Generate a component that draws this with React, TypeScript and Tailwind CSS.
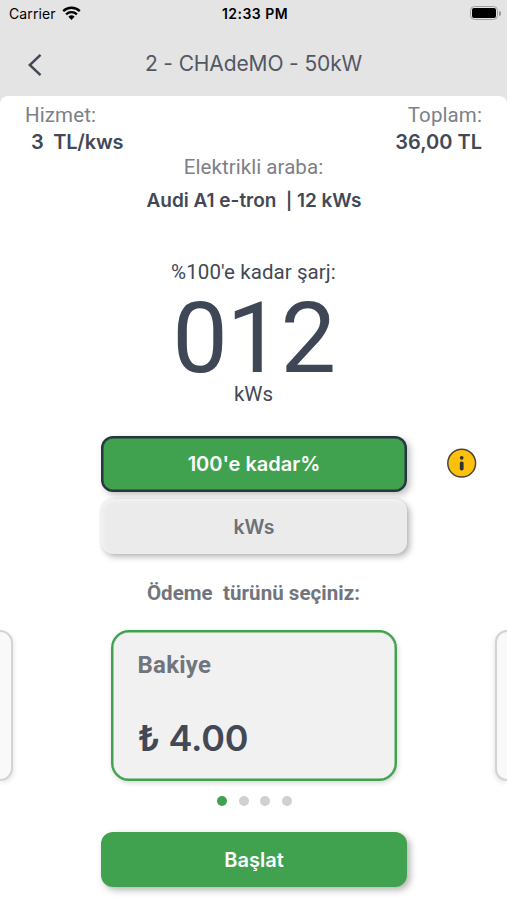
import React from "react";

const inter = "font-[Inter,sans-serif]";
const roboto = "font-[Roboto,sans-serif]";

function StatusBar() {
  return (
    <div className="flex h-7 items-center pl-[9px] pr-[6px] text-black">
      <div className="flex flex-1 items-center gap-[6px]">
        <span className={`${inter} text-[14px] leading-7 tracking-[0.1px]`}>Carrier</span>
        <svg width="19" height="14" viewBox="0 0 19 14" className="-mt-0.5">
          <path d="M9.5 14 L6.4 10.7 A4.6 4.6 0 0 1 12.6 10.7 Z" fill="black" />
          <path d="M4.1 8.3 A7.8 7.8 0 0 1 14.9 8.3" fill="none" stroke="black" strokeWidth="2.3" />
          <path d="M1.2 5.1 A12 12 0 0 1 17.8 5.1" fill="none" stroke="black" strokeWidth="2.3" />
        </svg>
      </div>
      <span className={`${inter} text-[14px] font-semibold leading-7 tracking-[0.45px]`}>12:33 PM</span>
      <div className="flex flex-1 items-center justify-end gap-px">
        <div className="mt-[-2px] flex h-[14px] w-[28px] rounded-[4.5px] border-[1.5px] border-[#a0a0a0] p-px">
          <div className="flex-1 rounded-[2px] bg-black" />
        </div>
        <div className="mt-[-2px] h-[5px] w-[2px] rounded-r-full bg-[#999]" />
      </div>
    </div>
  );
}

function SideCard({ side }: { side: "left" | "right" }) {
  return (
    <div
      className={
        side === "left"
          ? "h-[151px] w-[13px] rounded-r-[16px] border-2 border-l-0 border-[#d3d3d3] bg-[#f9f9f9] shadow-[1px_2px_4px_#0000001a]"
          : "h-[151px] w-[12px] rounded-l-[16px] border-2 border-r-0 border-[#d3d3d3] bg-[#f9f9f9] shadow-[-1px_2px_4px_#0000001a]"
      }
    />
  );
}

export default function App() {
  return (
    <div className={`${roboto} flex h-[900px] w-[507px] flex-col overflow-hidden bg-[#e4e4e4] text-[#424855]`}>
      <StatusBar />
      <header className="flex h-[68px] shrink-0 items-center">
        <svg width="16" height="24" viewBox="0 0 16 24" className="ml-[27px] mt-[6px]">
          <path d="M13.5 1.8 L2.8 12 L13.5 22.2" fill="none" stroke="#424855" strokeWidth="2.5" />
        </svg>
        <h1 className={`${inter} mr-[43px] mt-[4px] flex-1 text-center text-[21px] leading-7 tracking-[-0.13px] text-[#525763]`}>
          2 - CHAdeMO - 50kW
        </h1>
      </header>

      <main className="flex flex-1 flex-col rounded-t-[8px] bg-white">
        <div className="flex h-[59px] justify-between px-[25px] pt-[6px] text-[20px] leading-[27px]">
          <div>
            <div className="text-[20.5px] tracking-[0.1px] text-[#7d8086]">Hizmet:</div>
            <div className={`${inter} whitespace-pre pl-[6px] font-semibold tracking-[-0.2px]`}>3  TL/kws</div>
          </div>
          <div className="text-right">
            <div className="text-[20.5px] tracking-[0.1px] text-[#7d8086]">Toplam:</div>
            <div className={`${inter} font-semibold`}>36,00 TL</div>
          </div>
        </div>
        <div className="h-[32px] text-center text-[20.5px] leading-[24px] tracking-[0.05px] text-[#7d8086]">Elektrikli araba:</div>
        <div className={`${inter} h-[73px] whitespace-pre pl-px text-center text-[19px] font-semibold leading-[27px]`}>
          Audi A1 e-tron  <span className="text-[17px]">|</span> 12 kWs
        </div>

        <div className="h-[34px] text-center text-[20.5px] leading-[24px] tracking-[0.08px]">%100'e kadar şarj:</div>
        <div className="h-[88px] text-center text-[99px] leading-[88px] tracking-[-1.5px] text-[#3f4756]">012</div>
        <div className="h-[54px] text-center text-[20.5px] leading-[24px]">kWs</div>

        <div className="flex items-start">
          <div className="ml-[101px] flex w-[306px] flex-col gap-[7px]">
            <button className={`${inter} h-[56px] rounded-[12px] border-2 border-[#263540] bg-[#40a24f] text-[20px] font-semibold text-white shadow-[inset_0_0_0_0.5px_#263540,3px_3px_7px_#00000040]`}>
              100'e kadar%
            </button>
            <button className={`${inter} h-[55px] rounded-[12px] bg-[#ebebeb] pt-[2px] text-[19.5px] font-semibold text-[#6d7077] shadow-[3px_3px_6px_#00000045,0_0_3px_#00000018,inset_2px_2px_5px_#ffffff70]`}>
              kWs
            </button>
          </div>
          <svg width="30" height="30" viewBox="0 0 30 30" className="ml-[40px] mt-[12px]">
            <circle cx="14.7" cy="15.2" r="13.9" fill="#fdc10b" stroke="#4a463c" strokeWidth="1.5" />
            <circle cx="14.7" cy="9.8" r="1.9" fill="#303134" />
            <rect x="12.8" y="13.4" width="3.8" height="9" rx="1.7" fill="#303134" />
          </svg>
        </div>

        <h2 className="mt-[27px] h-[49px] whitespace-pre text-center text-[20.5px] font-bold leading-[24px] tracking-[0.05px] text-[#71757d]">
          Ödeme  türünü seçiniz:
        </h2>

        <div className="flex justify-between">
          <SideCard side="left" />
          <div className="mr-px flex h-[151px] w-[286px] flex-col rounded-[18px] border-2 border-[#40a24f] bg-[#f1f1f1] pl-[25px] shadow-[inset_0_0_0_0.5px_#40a24f,1px_2px_5px_#0000002b]">
            <div className="mt-[19px] text-[24px] font-bold leading-[28px] tracking-[0.25px] text-[#71757d]">Bakiye</div>
            <div className={`${inter} mt-[37px] text-[36px] font-semibold leading-[44px] tracking-[-0.3px]`}>₺ 4.00</div>
          </div>
          <SideCard side="right" />
        </div>

        <div className="ml-[217px] mt-[15px] flex gap-[11.7px]">
          <span className="size-[10px] rounded-full bg-[#40a24f]" />
          <span className="size-[10px] rounded-full bg-[#d0d0d0]" />
          <span className="size-[10px] rounded-full bg-[#d0d0d0]" />
          <span className="size-[10px] rounded-full bg-[#d0d0d0]" />
        </div>

        <button className={`${inter} ml-[101px] mt-[26px] h-[55px] w-[306px] rounded-[12px] bg-[#40a24f] text-[20px] font-semibold text-white shadow-[3px_3px_7px_#0000004d]`}>
          Başlat
        </button>
      </main>
    </div>
  );
}
